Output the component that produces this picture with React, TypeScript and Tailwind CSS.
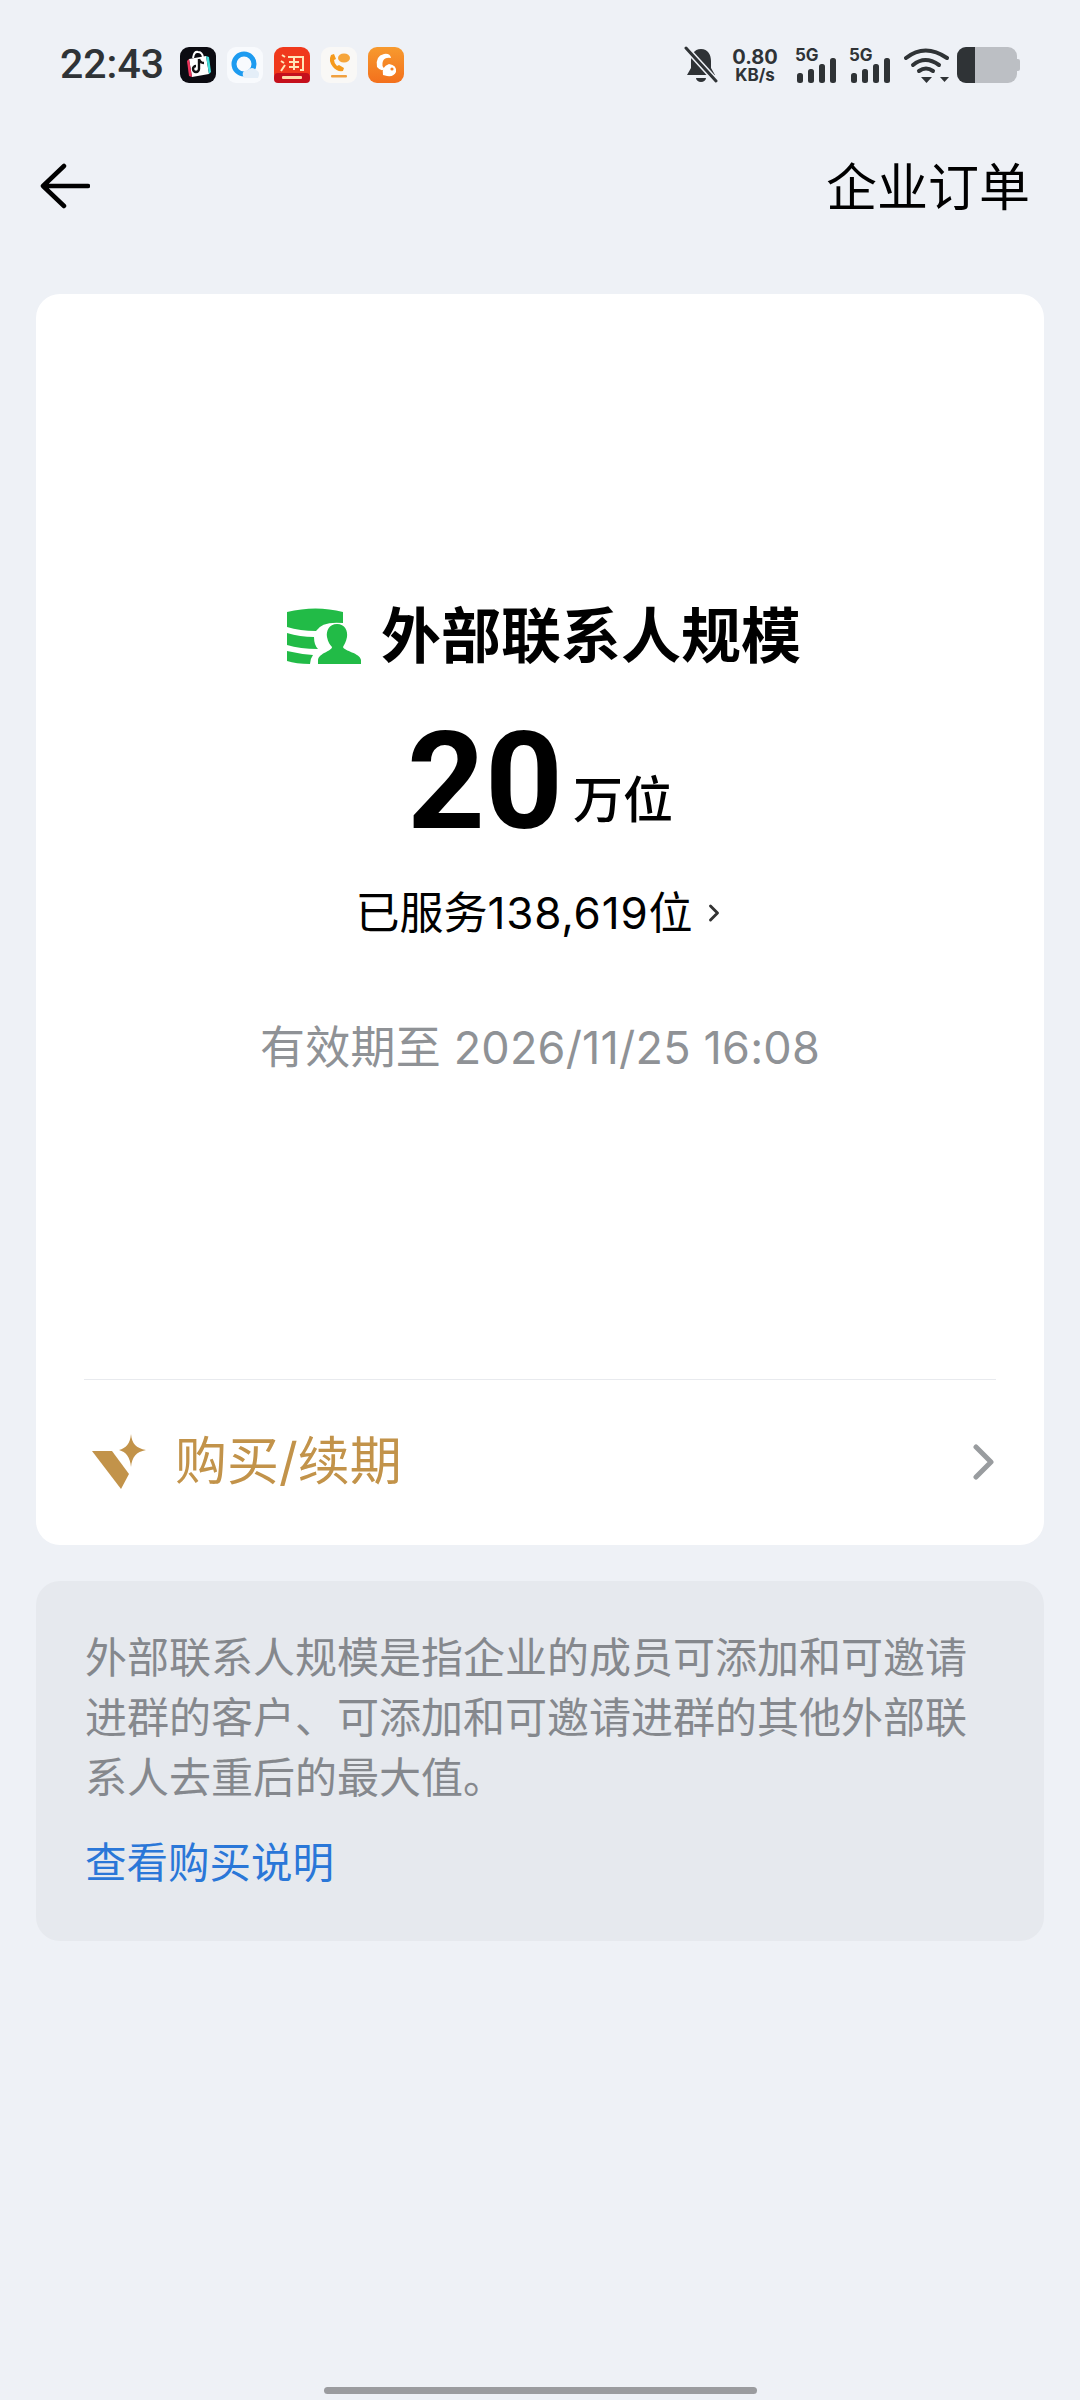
import { ChevronRight } from "lucide-react";

const cjk = "font-['Inter','Noto_Sans_CJK_SC',sans-serif]";

function AppIcons() {
  return (
    <div className="flex items-center gap-[11px] ml-[16px]">
      {/* shopping bag */}
      <svg width="36" height="36" viewBox="0 0 36 36">
        <rect width="36" height="36" rx="9" fill="#0c0c12" />
        <path d="M9 12 L26 9 L29 27 L12 30 Z" fill="#fff" />
        <path d="M13 11 Q14 4 18 5 Q22 5 23 10" fill="none" stroke="#fff" strokeWidth="2" />
        <path d="M7 14 L9 12 L12 30 L9 29 Z" fill="#f0345c" />
        <path d="M26 9 L29 10 L31 25 L29 27 Z" fill="#3fe0dc" />
        <path d="M19 12 V22 A3 3 0 1 1 16 19 M19 12 Q20 16 24 16" fill="none" stroke="#111" strokeWidth="2.4" />
      </svg>
      {/* browser */}
      <svg width="36" height="36" viewBox="0 0 36 36">
        <rect width="36" height="36" rx="9" fill="#f8fafd" />
        <circle cx="17" cy="17" r="10" fill="none" stroke="#1d9bf0" strokeWidth="5" />
        <path d="M17 31 Q13 24 21 23 Q25 19 29 23 Q34 25 31 31 Z" fill="#e4eef8" />
      </svg>
      {/* taobao */}
      <svg width="36" height="36" viewBox="0 0 36 36">
        <rect width="36" height="36" rx="9" fill="#f0391c" />
        <rect y="26" width="36" height="10" rx="4" fill="#c5101c" />
        <path d="M8 8 L11 10 M7 14 L10 16 M7 24 L11 18 M14 10 H29 V23 H26 M15 15 H25 M15 20 H25 M20 10 V23" fill="none" stroke="#ffe6b8" strokeWidth="2" />
        <rect x="8" y="29" width="20" height="3" rx="1" fill="#ffd9a8" />
      </svg>
      {/* phone */}
      <svg width="36" height="36" viewBox="0 0 36 36">
        <rect width="36" height="36" rx="9" fill="#f9f8f6" />
        <path d="M10 8 Q7 14 12 20 Q16 25 22 24 L23 21 L18 18 L16 19 Q13 16 13 13 L15 12 L13 7 Z" fill="#f59a1c" />
        <ellipse cx="23" cy="11" rx="6" ry="4.5" fill="#f6a53a" />
        <rect x="10" y="28" width="16" height="2.5" rx="1" fill="#f0a040" />
      </svg>
      {/* squirrel */}
      <svg width="36" height="36" viewBox="0 0 36 36">
        <defs>
          <linearGradient id="uc" x1="0" y1="0" x2="0" y2="1">
            <stop offset="0" stopColor="#f79a2e" />
            <stop offset="1" stopColor="#f3701c" />
          </linearGradient>
        </defs>
        <rect width="36" height="36" rx="9" fill="url(#uc)" />
        <path d="M9 20 Q7 9 16 7 Q22 6 23 11 Q17 10 15 14 Q13 19 17 22 Q13 25 9 20 Z" fill="#fff" />
        <path d="M15 28 Q13 20 21 17 Q29 18 28 25 Q26 30 19 29 Z" fill="#fff" />
        <circle cx="24" cy="22" r="1.6" fill="#f58020" />
      </svg>
    </div>
  );
}

function StatusIcons() {
  const Signal = () => (
    <div className="flex flex-col items-start w-[46px]">
      <span className="text-[17px] leading-[17px] font-bold text-[#2f3336] font-['Inter',sans-serif]">5G</span>
      <svg width="44" height="26" viewBox="0 0 44 26" className="-mt-[6px]">
        <rect x="2" y="15" width="6" height="10" rx="2.5" fill="#2f3336" />
        <rect x="13" y="11" width="6" height="14" rx="2.5" fill="#2f3336" />
        <rect x="24" y="6" width="6" height="19" rx="2.5" fill="#2f3336" />
        <rect x="35" y="0" width="6" height="25" rx="2.5" fill="#2f3336" />
      </svg>
    </div>
  );

  return (
    <div className="flex items-center">
      <svg width="34" height="38" viewBox="0 0 34 38" className="mr-[12px]">
        <path d="M17 3 C24 3 27 9 27 15 V22 L31 29 H3 L7 22 V15 C7 9 10 3 17 3 Z" fill="#2f3336" />
        <path d="M12 32 A5 4 0 0 0 22 32 Z" fill="#2f3336" />
        <path d="M2 2 L32 35" stroke="#eef1f6" strokeWidth="6" />
        <path d="M2 2 L32 35" stroke="#2f3336" strokeWidth="3" strokeLinecap="round" />
      </svg>
      <div className="flex flex-col items-center w-[50px] mr-[15px] font-['Inter',sans-serif] font-bold text-[#2f3336]">
        <span className="text-[20px] leading-[20px]">0.80</span>
        <span className="text-[17px] leading-[16px]">KB/s</span>
      </div>
      <div className="mr-[8px]"><Signal /></div>
      <div className="mr-[9px]"><Signal /></div>
      <svg width="46" height="38" viewBox="0 0 46 38" className="mr-[7px]">
        <path d="M2 12 Q21 -3 43 12" fill="none" stroke="#2f3336" strokeWidth="4" strokeLinecap="round" />
        <path d="M9 19 Q21 9 35 19" fill="none" stroke="#2f3336" strokeWidth="4" strokeLinecap="round" />
        <path d="M15 25 Q22 20 29 25" fill="none" stroke="#2f3336" strokeWidth="4" strokeLinecap="round" />
        <path d="M17 31 H28 L22.500 37 Z" fill="#2f3336" />
        <path d="M36 31 H45 L40.500 36 Z" fill="#2f3336" />
      </svg>
      <div className="flex items-center">
        <div className="flex w-[60px] h-[36px] rounded-[9px] overflow-hidden bg-[#bcbfc4]">
          <div className="w-[18px] bg-[#2f3336]" />
        </div>
        <div className="w-[3px] h-[12px] bg-[#bcbfc4] rounded-r-[2px]" />
      </div>
    </div>
  );
}

function ContactScaleIcon() {
  return (
    <svg width="76" height="58" viewBox="0 0 76 58">
      <path d="M1 5 Q30 -2 57 5 V16 Q36 14 30 24 Q14 24 1 20 Z" fill="#22bb47" />
      <path d="M1 26 Q14 30 28 30 Q28 38 32 42 Q14 42 1 38 Z" fill="#22bb47" />
      <path d="M1 44 Q14 47 27 48 Q24 52 24 57 Q10 57 1 54 Z" fill="#22bb47" />
      <path d="M51 17 C59 17 62 24 61 30 C60 35 58 38 57 40 C58 44 74 46 75 53 V57 H32 V53 C33 46 46 44 46 40 C44 38 42 35 41 30 C40 24 43 17 51 17 Z" fill="#22bb47" />
    </svg>
  );
}

function GoldIcon() {
  return (
    <svg width="56" height="56" viewBox="0 0 56 56">
      <path d="M0 17 H20 L37 40 L29 55 Z" fill="#c2934a" />
      <path d="M39 0 C40 10 44 14 54 16 C44 18 40 23 39 33 C38 23 34 18 27 16 C34 14 38 10 39 0 Z" fill="#c2934a" />
    </svg>
  );
}

export default function App() {
  return (
    <div className={`w-[1080px] h-[2400px] bg-[#eef1f6] flex flex-col ${cjk}`}>
      {/* status bar */}
      <div className="flex items-center justify-between h-[130px] pl-[60px] pr-[60px]">
        <div className="flex items-center">
          <span className="text-[41px] font-medium text-[#2f3336] font-['Roboto',sans-serif]">22:43</span>
          <AppIcons />
        </div>
        <StatusIcons />
      </div>

      {/* nav */}
      <div className="flex items-center justify-between h-[112px] pl-[40px] pr-[50px]">
        <svg width="50" height="48" viewBox="0 0 50 48">
          <path d="M48 24 H4 M24 4 L3 24 L24 44" fill="none" stroke="#000" strokeWidth="4.500" strokeLinecap="round" strokeLinejoin="round" />
        </svg>
        <span className="text-[51px] text-black pt-[4px]">企业订单</span>
      </div>

      {/* main card */}
      <div className="mx-[36px] mt-[52px] h-[1251px] bg-white rounded-[24px] flex flex-col">
        <div className="flex-1 flex flex-col items-center pt-[296px]">
          <div className="flex items-center gap-[19px] h-[92px] ml-[7px]">
            <ContactScaleIcon />
            <span className="text-[60px] font-bold text-black">外部联系人规模</span>
          </div>
          <div className="flex items-end gap-[10px] mt-[34px] h-[132px]">
            <span className="text-[136px] leading-[132px] font-bold text-black font-['Roboto',sans-serif]">20</span>
            <span className="text-[50px] font-medium text-black leading-[96px]">万位</span>
          </div>
          <div className="flex items-center mt-[35px] pl-[4px] text-[44px] text-black h-[60px]">
            <span>已服务<span className="tracking-[0.8px]">138,619</span>位</span>
            <ChevronRight size={28} strokeWidth={2.5} className="ml-[8px] text-[#333]" />
          </div>
          <div className="mt-[71px] text-[45px] tracking-[0.2px] text-[#8f9296]">有效期至 2026/11/25 16:08</div>
        </div>
        <div className="mx-[48px] border-t border-[#e8eaee] h-[166px] flex items-center justify-between pb-[2px]">
          <div className="flex items-center gap-[27px] pl-[8px]">
            <GoldIcon />
            <span className="text-[52px] text-[#c2934a]">购买/续期</span>
          </div>
          <svg width="24" height="36" viewBox="0 0 24 36">
            <path d="M4 3 L19 18 L4 33" fill="none" stroke="#999c9f" strokeWidth="5" strokeLinecap="round" strokeLinejoin="round" />
          </svg>
        </div>
      </div>

      {/* info box */}
      <div className="mx-[36px] mt-[36px] h-[360px] bg-[#e6e9ee] rounded-[24px] px-[49px] pt-[47px]">
        <p className="text-[42px] leading-[60px] text-[#85888d]">
          外部联系人规模是指企业的成员可添加和可邀请进群的客户、可添加和可邀请进群的其他外部联系人去重后的最大值。
        </p>
        <p className="mt-[25px] text-[41.500px] leading-[60px] text-[#2a77d8]">查看购买说明</p>
      </div>

      <div className="flex-1 flex items-end justify-center pb-[6px]">
        <div className="w-[433px] h-[7px] rounded-full bg-[#9b9c9f]" />
      </div>
    </div>
  );
}
